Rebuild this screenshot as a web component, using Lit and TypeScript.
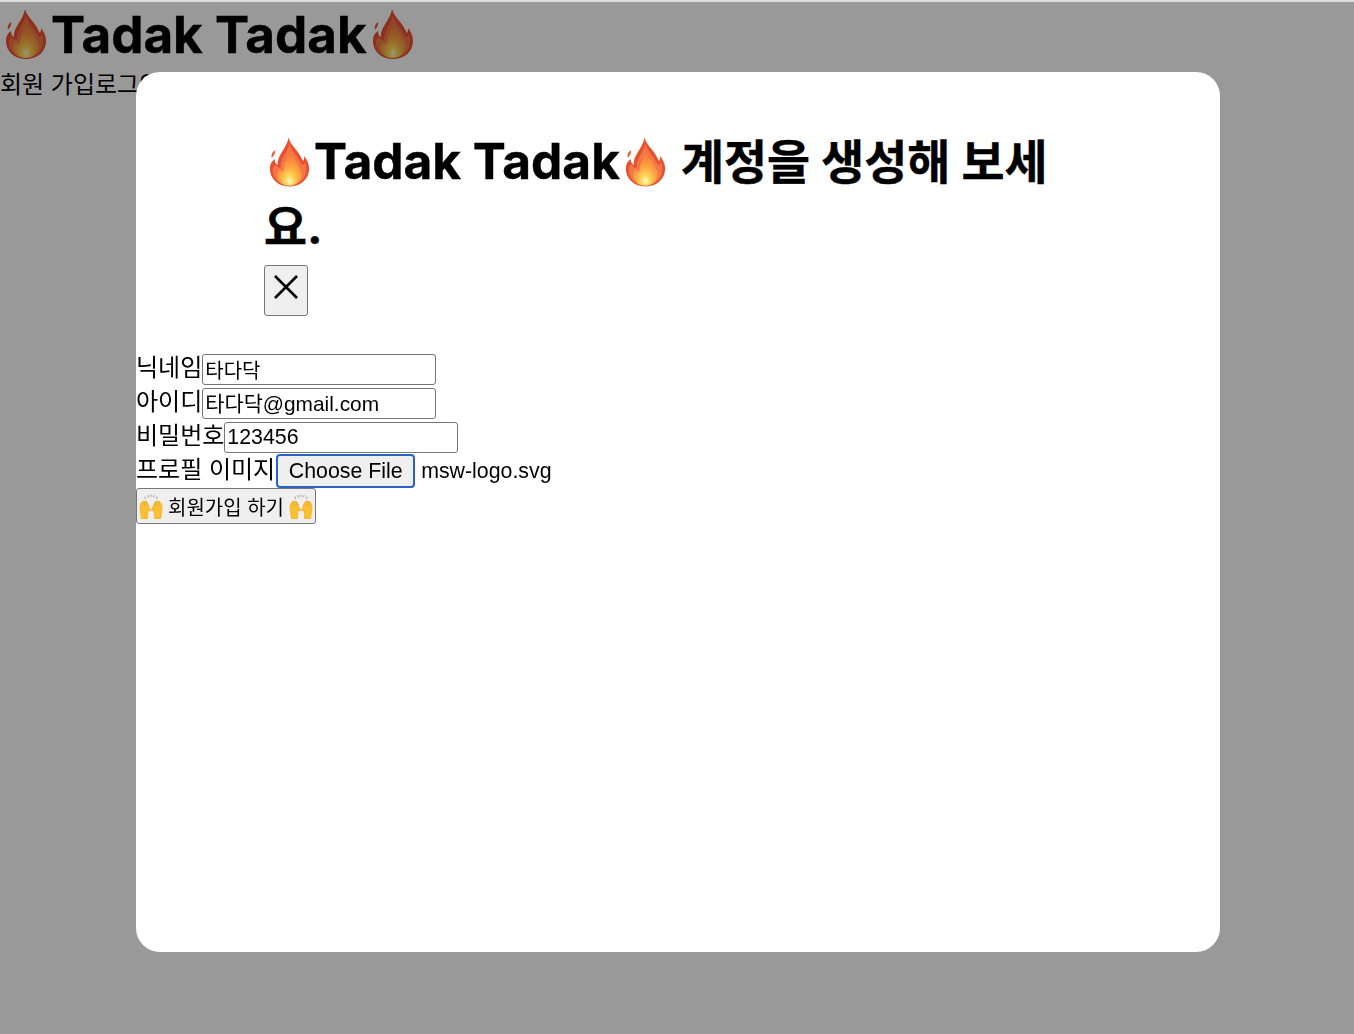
import { LitElement, html, css, svg } from "lit";
import { customElement } from "lit/decorators.js";

const flame = (id: string) => html`<svg class="emoji-flame" viewBox="-5 0 51 50" aria-hidden="true">
  <defs>
    <radialGradient id=${id} cx="50%" cy="88%" r="70%">
      <stop offset="0" stop-color="#fffbd0"/>
      <stop offset=".22" stop-color="#ffd95a"/>
      <stop offset=".6" stop-color="#fba23f"/>
      <stop offset="1" stop-color="#f77f3a"/>
    </radialGradient>
  </defs>
  ${svg`<path fill="#e9502e" d="M20 0C22 7 27 11 31 17C33 20 34 23 35 24C36 22 36 21 36 19C39 23 41 27 41 32C41 43 32 50 21 50C10 50 1 43 1 32C1 27 3 24 6 22C6 25 7 27 9 28C8 18 18 12 20 0Z"/>
  <path fill="#ee5a32" d="M6 13C7 16 5 18 3 21C2 18 3 15 6 13Z"/>
  <path fill="#f3764a" d="M21 6C22 13 28 18 32 25C33 27 34 28 35 28C36 27 36.500 26 37 25C38 28 38 30 38 33C38 42 31 49 21 49C11 49 4 42 4 34C4 31 5 29 6.500 27.500C7.500 29 9 30.500 12 31C11 22 19 16 21 6Z"/>
  <path fill="url(#${id})" d="M21 12C22 19 28 23 31 30C32 32 32 33 33 33.500C34 36 34 38 33 41C31 46 26 49 21 49C15 49 10 46 8.500 41C7.500 37 9 34 11 33C12 34 13.500 35 15 35C14 27 20 22 21 12Z"/>`}
</svg>`;

const hands = () => html`<svg class="hands" viewBox="0 0 26 26" aria-hidden="true">
  ${svg`<g fill="#fbc02f" stroke="#e9a21d" stroke-width=".5">
    <path d="M3.500 26L2 17C1.500 12 3 8 6.500 8C9.500 8 10.500 11.500 11 14L12.500 16.500C12.900 17.500 12 18.500 11 17.800L10 17L9.500 26Z"/>
    <path d="M22.500 26L24 17C24.500 12 23 8 19.500 8C16.500 8 15.500 11.500 15 14L13.500 16.500C13.100 17.500 14 18.500 15 17.800L16 17L16.500 26Z"/>
  </g>
  <g stroke="#e0a73a" stroke-width=".6" fill="none">
    <path d="M4.500 8.500L5 13M6.500 8L7 13M8.500 8.500L8.500 13M21.500 8.500L21 13M19.500 8L19 13M17.500 8.500L17.500 13"/>
  </g>
  <g stroke="#9a9a9a" stroke-width="1" stroke-linecap="round">
    <path d="M7 4L7.500 5.500M10 2.500L10.300 4M13 2V3.500M16 2.500L15.700 4M19 4L18.500 5.500"/>
  </g>`}
</svg>`;

@customElement("app-root")
export class AppRoot extends LitElement {
  static styles = css`
    :host {
      display: block;
      box-sizing: border-box;
      height: 1034px;
      background: #fff;
      border-top: 2px solid #dcdcdc;
      font-family: "Inter", "Noto Sans CJK KR", sans-serif;
      color: #000;
      overflow: hidden;
    }
    .page-title {
      margin: 0 0 2px;
      height: 64px;
      display: flex;
      align-items: center;
      font-size: 51.2px;
      line-height: 64px;
      font-weight: 700;
      white-space: pre;
      -webkit-text-stroke: 0.4px #000;
    }
    .emoji-flame {
      width: 51px;
      height: 50px;
      flex: none;
    }
    .page-nav {
      font-family: "Liberation Sans", "Noto Sans CJK KR", sans-serif;
      font-size: 24px;
      line-height: 34px;
    }
    .overlay {
      position: fixed;
      inset: 2px 0 0 0;
      background: rgba(0, 0, 0, 0.4);
      display: flex;
      justify-content: center;
      align-items: flex-start;
    }
    .modal {
      box-sizing: border-box;
      width: 1084px;
      height: 880px;
      margin-top: 70px;
      margin-left: 2px;
      background: #fff;
      border-radius: 24px;
      padding-top: 57px;
    }
    .modal-head {
      padding: 0 128px;
    }
    h2 {
      margin: 0 0 6px;
      font-size: 49.6px;
      line-height: 64px;
      font-weight: 700;
      -webkit-text-stroke: 0.4px #000;
    }
    h2 .emoji-flame {
      display: inline-block;
      width: 50px;
      vertical-align: -8px;
    }
    h2 .ko {
      font-size: 46.8px;
    }
    .close {
      box-sizing: border-box;
      width: 44px;
      height: 51px;
      padding: 0;
      display: flex;
      align-items: center;
      justify-content: center;
      background: #efefef;
      border: 1px solid #767676;
      border-radius: 3px;
      margin-bottom: 38px;
    }
    .close svg {
      width: 26px;
      height: 26px;
      margin-top: -7px;
    }
    form {
      display: flex;
      flex-direction: column;
      align-items: flex-start;
      font-family: "Liberation Sans", "Noto Sans CJK KR", sans-serif;
    }
    .row {
      display: flex;
      align-items: flex-start;
      height: 34px;
    }
    .row.short {
      height: 32px;
    }
    label {
      font-size: 24px;
      line-height: 28px;
    }
    .file-row label {
      margin-top: 2px;
    }
    input {
      box-sizing: border-box;
      width: 234px;
      height: 31px;
      margin: 0;
      padding: 0 2px 1px;
      font: 20px "Liberation Sans", "Noto Sans CJK KR", sans-serif;
      color: #000;
      background: #fff;
      border: 1px solid #767676;
      border-radius: 3px;
      outline: none;
    }
    input.email {
      font-size: 20.86px;
      padding-bottom: 4px;
    }
    input.password {
      font-size: 21.33px;
      padding-bottom: 0;
    }
    .file-btn {
      box-sizing: border-box;
      width: 139px;
      height: 34px;
      padding: 0;
      margin: 0 6px 0 1px;
      font: 21.33px "Liberation Sans", sans-serif;
      color: #000;
      background: #efefef;
      border: 2px solid #2a62c9;
      border-radius: 4px;
    }
    .file-name {
      font-size: 21.33px;
      line-height: 34px;
    }
    .submit {
      box-sizing: border-box;
      display: flex;
      align-items: center;
      justify-content: center;
      gap: 4px;
      width: 180px;
      height: 36px;
      padding: 0;
      font: 20px "Liberation Sans", "Noto Sans CJK KR", sans-serif;
      color: #000;
      background: #efefef;
      border: 1px solid #767676;
      border-radius: 3px;
    }
    .hands {
      width: 26px;
      height: 26px;
      flex: none;
    }
  `;

  render() {
    return html`
      <h1 class="page-title">${flame("f1")}Tadak Tadak${flame("f2")}</h1>
      <div class="page-nav">회원 가입로그인</div>
      <div class="overlay">
        <div class="modal">
          <div class="modal-head">
            <h2>${flame("f3")}Tadak Tadak${flame("f4")}<span class="ko"> 계정을 생성해 보세요.</span></h2>
            <button class="close" type="button" aria-label="닫기">
              <svg viewBox="0 0 26 26"><path d="M2 2l22 22M24 2L2 24" stroke="#000" stroke-width="2.600" fill="none"/></svg>
            </button>
          </div>
          <form>
            <div class="row"><label>닉네임</label><input .value=${"타다닥"} /></div>
            <div class="row"><label>아이디</label><input class="email" .value=${"타다닥@gmail.com"} /></div>
            <div class="row short"><label>비밀번호</label><input class="password" .value=${"123456"} /></div>
            <div class="row file-row"><label>프로필 이미지</label><button class="file-btn" type="button">Choose File</button><span class="file-name">msw-logo.svg</span></div>
            <button class="submit" type="button">${hands()}회원가입 하기${hands()}</button>
          </form>
        </div>
      </div>
    `;
  }
}
